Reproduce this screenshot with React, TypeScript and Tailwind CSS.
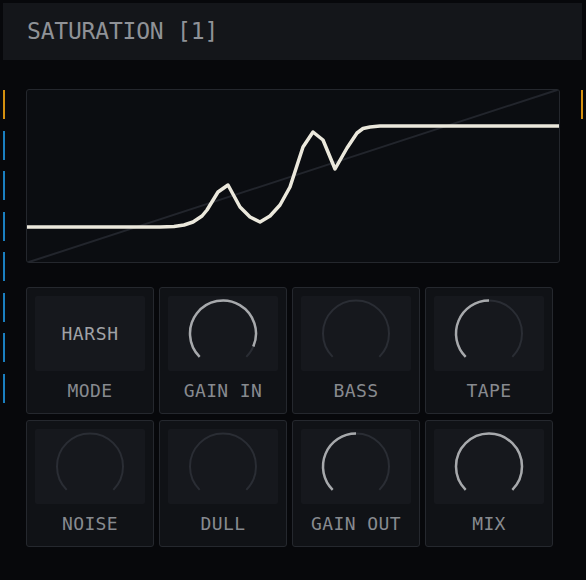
import React from 'react';

const mono = { fontFamily: '"DejaVu Sans Mono", "Liberation Mono", monospace' };

const curve: [number, number][] = [
  [0, 138], [134, 138], [148, 137.5], [158, 136], [167, 133], [176, 127], [181, 121],
  [192, 103], [202, 96], [214, 118], [224, 128], [234, 133], [244, 127], [254, 116],
  [264, 98], [277, 58], [287, 43], [297, 51], [309, 80], [321, 59], [331, 44],
  [337, 39.5], [344, 38], [354, 37], [534, 37],
];

const knobs: { label: string; value: number | null }[] = [
  { label: 'MODE', value: null },
  { label: 'GAIN IN', value: 0.92 },
  { label: 'BASS', value: 0 },
  { label: 'TAPE', value: 0.5 },
  { label: 'NOISE', value: 0 },
  { label: 'DULL', value: 0 },
  { label: 'GAIN OUT', value: 0.5 },
  { label: 'MIX', value: 1 },
];

const arc = (cx: number, cy: number, r: number, a0: number, a1: number) => {
  const p = (a: number) => {
    const rad = (a * Math.PI) / 180;
    return [cx + r * Math.sin(rad), cy - r * Math.cos(rad)];
  };
  const [x0, y0] = p(a0);
  const [x1, y1] = p(a1);
  const large = a1 - a0 > 180 ? 1 : 0;
  return `M ${x0} ${y0} A ${r} ${r} 0 ${large} 1 ${x1} ${y1}`;
};

const Knob: React.FC<{ value: number }> = ({ value }) => {
  const start = -135;
  const end = 135;
  const v = start + (end - start) * value;
  return (
    <svg width="110" height="75" viewBox="0 0 110 75">
      <path d={arc(55, 37.5, 33, start, end)} fill="none" stroke="#2a2d34" strokeWidth={2} />
      {value > 0 && (
        <path d={arc(55, 37.5, 33, start, v)} fill="none" stroke="#a7a9ac" strokeWidth={2.5} />
      )}
    </svg>
  );
};

const App: React.FC = () => {
  return (
    <div className="w-[586px] h-[580px] bg-[#07080b] overflow-hidden pt-[3px]" style={mono}>
      <div className="mx-[3px] mr-[4px] h-[57px] bg-[#14161a] flex items-center pl-[24px]">
        <span className="text-[23px] text-[#8f9297] tracking-[-0.2px]">SATURATION [1]</span>
      </div>

      <div className="flex mt-[29px]">
        <div className="w-[26px] pl-[3px] pt-[1px] flex flex-col gap-[11.5px]">
          <div className="w-[2px] h-[29px] bg-[#d4900f]" />
          {[0, 1, 2, 3, 4, 5, 6].map((i) => (
            <div key={i} className="w-[2px] h-[29px] bg-[#1a7fc0]" />
          ))}
        </div>

        <div className="w-[534px]">
          <div className="h-[174px] border border-[#24272d] rounded-[3px] bg-[#0b0d11] overflow-hidden">
            <svg width="532" height="172" viewBox="1 1 532 172">
              <line x1="0" y1="174" x2="534" y2="0" stroke="#22252c" strokeWidth={2} />
              <polyline
                points={curve.map((p) => p.join(',')).join(' ')}
                fill="none"
                stroke="#ebe8dc"
                strokeWidth={3.5}
                strokeLinejoin="round"
                strokeLinecap="round"
              />
            </svg>
          </div>

          <div className="grid grid-cols-[repeat(4,128px)] gap-x-[5px] gap-y-[6px] mt-[24px]">
            {knobs.map((k) => (
              <div
                key={k.label}
                className="h-[127px] border border-[#25282e] rounded-[3px] bg-[#101216] p-[8px] flex flex-col"
              >
                <div className="h-[75px] bg-[#16181d] rounded-[2px] flex items-center justify-center">
                  {k.value === null ? (
                    <span className="text-[18px] text-[#a0a2a6] tracking-[0.6px]">HARSH</span>
                  ) : (
                    <Knob value={k.value} />
                  )}
                </div>
                <div className="flex-1 flex items-center justify-center pt-[5px]">
                  <span className="text-[18px] text-[#878a8f] tracking-[0.4px]">{k.label}</span>
                </div>
              </div>
            ))}
          </div>
        </div>

        <div className="ml-[21px] pt-[1px]">
          <div className="w-[2px] h-[29px] bg-[#d4900f]" />
        </div>
      </div>
    </div>
  );
};

export default App;
